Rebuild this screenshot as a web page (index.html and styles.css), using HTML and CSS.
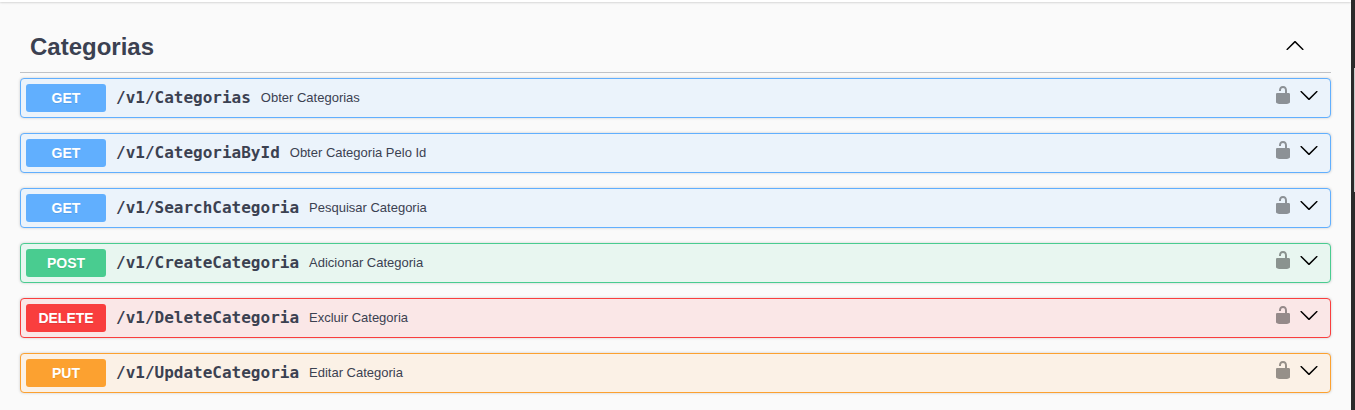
FILE: index.html
```html
<!DOCTYPE html>
<html lang="pt-BR">
<head>
<meta charset="utf-8">
<title>Categorias</title>
<link rel="stylesheet" href="styles.css">
</head>
<body>
<svg class="defs" width="0" height="0">
  <symbol id="arrow" viewBox="0 0 20 20"><path d="M17.418 6.109c.272-.268.709-.268.979 0s.271.701 0 .969l-7.908 7.83c-.27.268-.707.268-.979 0l-7.908-7.83c-.27-.268-.27-.701 0-.969s.709-.268.979 0L10 13.25l7.418-7.141z"/></symbol>
  <symbol id="unlocked" viewBox="0 0 20 20"><path d="M15.8 8H14V5.6C14 2.703 12.665 1 10 1 7.334 1 6 2.703 6 5.6V6h2v-.801C8 3.754 8.797 3 10 3c1.203 0 2 .754 2 2.199V8H4c-.553 0-1 .646-1 1.199V17c0 .549.428 1.139.951 1.307l1.197.387C5.672 18.861 6.55 19 7.1 19h5.8c.549 0 1.428-.139 1.951-.307l1.196-.387c.524-.167.953-.757.953-1.306V9.199C17 8.646 16.352 8 15.8 8z"/></symbol>
</svg>
<div class="frame">
  <main class="page">
    <div class="scheme-edge"></div>
    <section class="tag-section">
      <header class="tag-header">
        <h3 class="tag-title">Categorias</h3>
        <svg class="icon icon-up"><use href="#arrow"/></svg>
      </header>
      <div class="operations">
        <div class="op get"><span class="method">GET</span><span class="path">/v1/Categorias</span><span class="desc">Obter Categorias</span><svg class="icon lock"><use href="#unlocked"/></svg><svg class="icon"><use href="#arrow"/></svg></div>
        <div class="op get"><span class="method">GET</span><span class="path">/v1/CategoriaById</span><span class="desc">Obter Categoria Pelo Id</span><svg class="icon lock"><use href="#unlocked"/></svg><svg class="icon"><use href="#arrow"/></svg></div>
        <div class="op get"><span class="method">GET</span><span class="path">/v1/SearchCategoria</span><span class="desc">Pesquisar Categoria</span><svg class="icon lock"><use href="#unlocked"/></svg><svg class="icon"><use href="#arrow"/></svg></div>
        <div class="op post"><span class="method">POST</span><span class="path">/v1/CreateCategoria</span><span class="desc">Adicionar Categoria</span><svg class="icon lock"><use href="#unlocked"/></svg><svg class="icon"><use href="#arrow"/></svg></div>
        <div class="op delete"><span class="method">DELETE</span><span class="path">/v1/DeleteCategoria</span><span class="desc">Excluir Categoria</span><svg class="icon lock"><use href="#unlocked"/></svg><svg class="icon"><use href="#arrow"/></svg></div>
        <div class="op put"><span class="method">PUT</span><span class="path">/v1/UpdateCategoria</span><span class="desc">Editar Categoria</span><svg class="icon lock"><use href="#unlocked"/></svg><svg class="icon"><use href="#arrow"/></svg></div>
      </div>
    </section>
  </main>
  <div class="scrollbar"><div class="thumb"></div></div>
</div>
</body>
</html>
```
FILE: styles.css
```css
* { box-sizing: border-box; }
body {
  margin: 0;
  background: #fafafa;
  color: #3b4151;
  font-family: "Liberation Sans", Arial, sans-serif;
}
.defs { display: none; }
.frame { display: flex; height: 410px; overflow: hidden; }
.page { flex: 1; }
.scheme-edge {
  height: 2px;
  background: #fff;
  box-shadow: 0 1px 2px rgba(0, 0, 0, .15);
}
.tag-section { padding: 18px 20px 0; }
.tag-header {
  display: flex;
  align-items: center;
  height: 53px;
  padding: 0 26px 0 10px;
  border-bottom: 1px solid rgba(59, 65, 81, .3);
}
.tag-title { flex: 1; margin: 0; padding-top: 2px; font-size: 24px; line-height: 28px; }
.icon { display: block; flex: none; width: 20px; height: 20px; fill: #000; }
.icon-up { transform: rotate(180deg); }
.operations {
  display: flex;
  flex-direction: column;
  gap: 15px;
  padding-top: 5px;
}
.op {
  display: flex;
  align-items: center;
  height: 40px;
  padding: 0 11px 0 5px;
  border: 1px solid var(--accent);
  border-radius: 4px;
  background: var(--tint);
  box-shadow: 0 0 3px rgba(0, 0, 0, .19);
}
.get { --accent: #61affe; --tint: #ebf3fb; }
.post { --accent: #49cc90; --tint: #e8f6f0; }
.delete { --accent: #f93e3e; --tint: #fae7e7; }
.put { --accent: #fca130; --tint: #fbf1e6; }
.method {
  width: 80px;
  height: 28px;
  border-radius: 3px;
  background: var(--accent);
  color: #fff;
  font-size: 14px;
  font-weight: 700;
  line-height: 28px;
  text-align: center;
  text-shadow: 0 1px 0 rgba(0, 0, 0, .1);
}
.path {
  padding: 0 10px;
  font: 600 16px/20px "DejaVu Sans Mono", monospace;
}
.desc { flex: 1; font-size: 13px; line-height: 16px; }
.op .icon { margin-bottom: 6px; }
.op .lock { margin-right: 6px; opacity: .4; }
.scrollbar { width: 4px; padding: 68px 0 0 3px; background: #2b2b2b; }
.thumb { height: 124px; background: #c8c8c8; }
```
